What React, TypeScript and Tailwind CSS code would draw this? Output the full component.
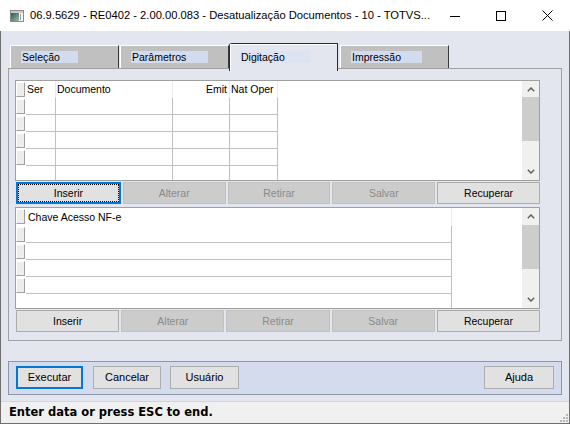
import React from "react";

const sans = "font-['Liberation_Sans',Arial,sans-serif]";

function AppIcon() {
  return (
    <svg width="14" height="12" viewBox="0 0 14 12">
      <defs>
        <linearGradient id="ico" x1="0" y1="0" x2="1" y2="1">
          <stop offset="0" stopColor="#2d5c50" />
          <stop offset="1" stopColor="#9fb7ae" />
        </linearGradient>
      </defs>
      <rect x="0.5" y="0.5" width="13" height="11" fill="#f4f4f4" stroke="#8a8a8a" />
      <rect x="1" y="1" width="12" height="2" fill="#c9c9c9" />
      <rect x="1" y="3" width="8" height="8" fill="url(#ico)" />
      <rect x="10" y="4" width="1" height="6" fill="#9a9a9a" />
    </svg>
  );
}

function RowButton() {
  return (
    <div className="w-[10px] shrink-0 pt-[1px]">
      <div className="w-[9px] h-[15px] bg-[#ededed] border border-t-white border-l-white border-r-[#a0a0a0] border-b-[#a0a0a0]" />
    </div>
  );
}

function ChevronUp() {
  return (
    <svg width="8" height="5" viewBox="0 0 8 5">
      <path d="M0.8 4.2 L4 1 L7.2 4.2" stroke="#606060" strokeWidth="1.5" fill="none" />
    </svg>
  );
}

function ChevronDown() {
  return (
    <svg width="8" height="5" viewBox="0 0 8 5">
      <path d="M0.8 0.8 L4 4 L7.2 0.8" stroke="#606060" strokeWidth="1.5" fill="none" />
    </svg>
  );
}

function ScrollBar({ upClass }: { upClass: string }) {
  return (
    <div className="w-[17px] shrink-0 bg-[#f0f0f0] flex flex-col">
      <div className={upClass}>
        <ChevronUp />
      </div>
      <div className="h-[44px] bg-[#cdcdcd]" />
      <div className="flex-1" />
      <div className="h-[17px] flex items-center justify-center">
        <ChevronDown />
      </div>
    </div>
  );
}

type Col = { w: string; label: string; align: string };

const docCols: Col[] = [
  { w: "w-[30px]", label: "Ser", align: "pl-[1px]" },
  { w: "w-[117px]", label: "Documento", align: "pl-[1px]" },
  { w: "w-[57px]", label: "Emit", align: "justify-end pr-[2px]" },
  { w: "w-[48px]", label: "Nat Oper", align: "pl-[1px]" },
];

function DocumentGrid() {
  return (
    <div className="h-[101px] w-[525px] border border-[#a0a0a0] bg-white flex">
      <div className="flex-1 flex flex-col">
        <div className="h-[17px] flex shrink-0">
          <RowButton />
          {docCols.map((c) => (
            <div key={c.label} className={`${c.w} flex items-center border-r border-[#ececec] ${c.align}`}>
              {c.label}
            </div>
          ))}
        </div>
        {[0, 1, 2, 3].map((r) => (
          <div key={r} className="h-[17px] flex shrink-0">
            <RowButton />
            {docCols.map((c) => (
              <div key={c.label} className={`${c.w} border-r border-b border-[#c0c0c0]`} />
            ))}
          </div>
        ))}
        <div className="flex-1 flex">
          <div className="w-[10px]" />
          {docCols.map((c) => (
            <div key={c.label} className={`${c.w} border-r border-[#c0c0c0]`} />
          ))}
        </div>
      </div>
      <ScrollBar upClass="h-[16px] flex items-center justify-center" />
    </div>
  );
}

function KeyGrid() {
  return (
    <div className="h-[102px] w-[525px] border border-[#a0a0a0] bg-white flex">
      <div className="flex-1 flex flex-col">
        <div className="h-[18px] flex shrink-0">
          <RowButton />
          <div className="w-[426px] flex items-center pl-[2px] border-r border-[#ececec]">Chave Acesso NF-e</div>
        </div>
        {[0, 1, 2, 3].map((r) => (
          <div key={r} className="h-[17px] flex shrink-0">
            <RowButton />
            <div className="w-[426px] border-r border-b border-[#c0c0c0]" />
          </div>
        ))}
        <div className="flex-1 flex">
          <div className="w-[10px]" />
          <div className="w-[426px] border-r border-[#c0c0c0]" />
        </div>
      </div>
      <ScrollBar upClass="h-[17px] flex items-center justify-center" />
    </div>
  );
}

function GridButton({ label, disabled, focused }: { label: string; disabled?: boolean; focused?: boolean }) {
  if (focused) {
    return (
      <div className="flex-1 h-[22px] border-2 border-[#0078d7] bg-[#e1e1e1] flex">
        <div className="flex-1 border border-dotted border-black flex items-center justify-center text-black">
          {label}
        </div>
      </div>
    );
  }
  return (
    <div
      className={
        disabled
          ? "flex-1 h-[22px] border border-[#c2c2c2] bg-[#cccccc] text-[#8a8a8a] flex items-center justify-center"
          : "flex-1 h-[22px] border border-[#adadad] bg-[#e1e1e1] text-black flex items-center justify-center"
      }
    >
      {label}
    </div>
  );
}

function ButtonRow({ focusFirst }: { focusFirst?: boolean }) {
  return (
    <div className="w-[524px] ml-[1px] flex gap-[2px]">
      <GridButton label="Inserir" focused={focusFirst} />
      <GridButton label="Alterar" disabled />
      <GridButton label="Retirar" disabled />
      <GridButton label="Salvar" disabled />
      <GridButton label="Recuperar" />
    </div>
  );
}

function Tab({ label, width, labelWidth, className }: { label: string; width: string; labelWidth: string; className: string }) {
  return (
    <div className={`${width} ${className}`}>
      <div className={`${labelWidth} h-[12px] ml-[10px] bg-[#d3dcef] flex items-center pl-[1px]`}>{label}</div>
    </div>
  );
}

function DialogButton({ label, width, focused }: { label: string; width: string; focused?: boolean }) {
  return (
    <div
      className={
        focused
          ? `${width} h-[23px] border-2 border-[#0078d7] bg-[#e1e1e1] flex items-center justify-center`
          : `${width} h-[23px] border border-[#adadad] bg-[#e1e1e1] flex items-center justify-center`
      }
    >
      {label}
    </div>
  );
}

export default function App() {
  return (
    <div className={`w-[570px] h-[424px] flex flex-col bg-white text-black ${sans}`}>
      {/* caption bar */}
      <div className="h-[31px] shrink-0 bg-white flex items-center">
        <div className="ml-[10px] flex items-center">
          <AppIcon />
        </div>
        <div className="ml-[6px] text-[11.2px] leading-none whitespace-nowrap">
          06.9.5629 - RE0402 - 2.00.00.083 - Desatualização Documentos - 10 - TOTVS...
        </div>
        <div className="ml-auto flex h-full">
          <div className="w-[46px] h-full flex items-center justify-center">
            <svg width="10" height="10" viewBox="0 0 10 10">
              <rect x="0" y="5" width="10" height="1" fill="#000" />
            </svg>
          </div>
          <div className="w-[46px] h-full flex items-center justify-center">
            <svg width="10" height="10" viewBox="0 0 10 10">
              <rect x="0.5" y="0.5" width="9" height="9" fill="none" stroke="#000" strokeWidth="1" />
            </svg>
          </div>
          <div className="w-[46px] h-full flex items-center justify-center">
            <svg width="11" height="11" viewBox="0 0 11 11">
              <path d="M0.5 0.5 L10.5 10.5 M10.5 0.5 L0.5 10.5" stroke="#000" strokeWidth="1" />
            </svg>
          </div>
        </div>
      </div>

      {/* window body */}
      <div className="flex-1 flex flex-col bg-[#e3e6ee] border-l border-r border-b border-[#6e6e6e]">
        <div className="px-[7px] pt-[12px] text-[10.5px] leading-none">
          {/* tab headers */}
          <div className="h-[25px] flex items-end">
            <Tab
              label="Seleção"
              width="w-[109px]"
              labelWidth="w-[57px]"
              className="ml-[2px] h-[23px] pt-[5px] bg-[#c0c0c0] border-t border-l border-r border-t-white border-l-white border-r-[#3a3a3a]"
            />
            <Tab
              label="Parâmetros"
              width="w-[109px]"
              labelWidth="w-[77px]"
              className="ml-[1px] h-[23px] pt-[5px] bg-[#c0c0c0] border-t border-l border-r border-t-white border-l-white border-r-[#3a3a3a]"
            />
            <div className="w-[109px] h-[28px] -mb-[3px] relative z-10 bg-[#e3e6ee] border-t border-l border-r border-[#2a2a2a] rounded-tl-[3px]">
              <div className="h-full pt-[6px] border-t border-l border-white">
                <div className="w-[71px] h-[12px] ml-[9px] bg-[#dde3f0] flex items-center pl-[1px]">Digitação</div>
              </div>
            </div>
            <Tab
              label="Impressão"
              width="w-[109px]"
              labelWidth="w-[71px]"
              className="ml-[2px] h-[23px] pt-[5px] bg-[#c0c0c0] border-t border-l border-r border-t-white border-l-white border-r-[#3a3a3a]"
            />
          </div>

          {/* tab page */}
          <div className="h-[273px] w-[554px] border border-[#a0a0a0] pl-[6px] pt-[11px] flex flex-col">
            <DocumentGrid />
            <div className="mt-[1px]">
              <ButtonRow focusFirst />
            </div>
            <div className="mt-[3px]">
              <KeyGrid />
            </div>
            <div className="mt-[1px]">
              <ButtonRow />
            </div>
          </div>
        </div>

        {/* dialog buttons */}
        <div className="mt-[20px] mx-[7px] h-[34px] border border-[#8c98aa] bg-[#d3dbec] px-[7px] pt-[4px] flex items-start text-[11px] leading-none">
          <DialogButton label="Executar" width="w-[67px]" focused />
          <div className="ml-[10px]">
            <DialogButton label="Cancelar" width="w-[68px]" />
          </div>
          <div className="ml-[9px]">
            <DialogButton label="Usuário" width="w-[69px]" />
          </div>
          <div className="ml-auto">
            <DialogButton label="Ajuda" width="w-[70px]" />
          </div>
        </div>

        {/* status line */}
        <div className="mt-[6px] flex-1 bg-[#f0f0f0] border-t border-[#d4d4d4] flex items-center pl-[8px] relative">
          <span className="font-['DejaVu_Sans',Verdana,sans-serif] font-bold text-[11.5px] leading-none whitespace-nowrap">
            Enter data or press ESC to end.
          </span>
          <svg className="absolute right-[1px] bottom-[1px]" width="9" height="9" viewBox="0 0 9 9">
            <rect x="7" y="1" width="2" height="2" fill="#b8b8b8" />
            <rect x="4" y="4" width="2" height="2" fill="#b8b8b8" />
            <rect x="7" y="4" width="2" height="2" fill="#b8b8b8" />
            <rect x="1" y="7" width="2" height="2" fill="#b8b8b8" />
            <rect x="4" y="7" width="2" height="2" fill="#b8b8b8" />
            <rect x="7" y="7" width="2" height="2" fill="#b8b8b8" />
          </svg>
        </div>
      </div>
    </div>
  );
}
